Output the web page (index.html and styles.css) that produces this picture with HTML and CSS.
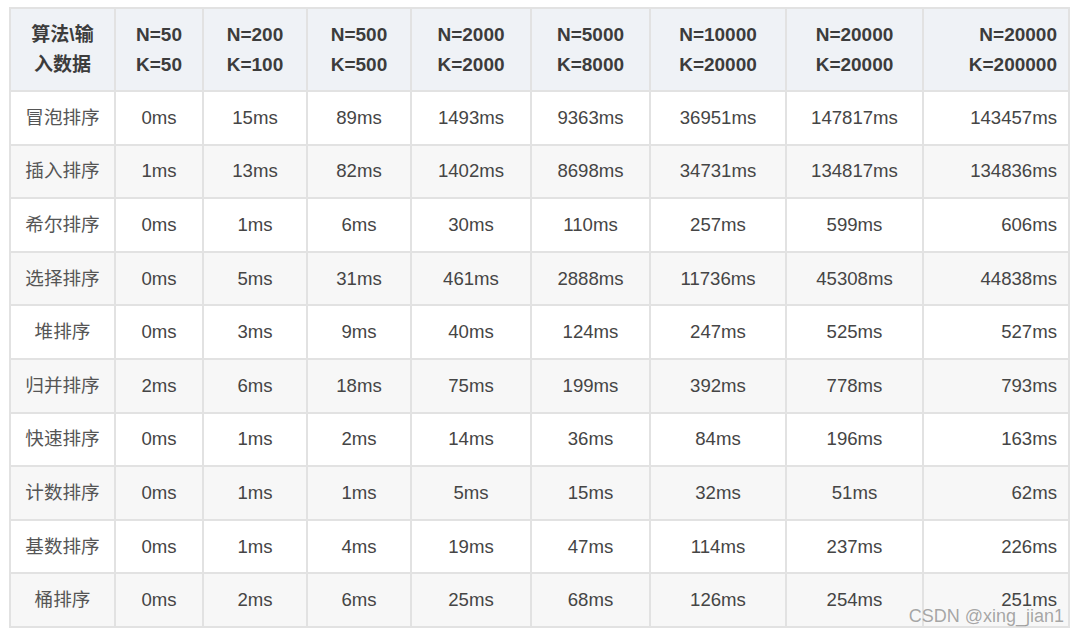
FILE: index.html
```html
<!DOCTYPE html>
<html lang="zh">
<head>
<meta charset="utf-8">
<title>排序算法耗时</title>
<link rel="stylesheet" href="styles.css">
</head>
<body>
<div class="wrap">
<table class="bench">
  <colgroup>
    <col class="c0"><col class="c1"><col class="c2"><col class="c3"><col class="c4"><col class="c5"><col class="c6"><col class="c7"><col class="c8">
  </colgroup>
  <thead>
    <tr>
      <th>算法\输<br>入数据</th>
      <th>N=50<br>K=50</th>
      <th>N=200<br>K=100</th>
      <th>N=500<br>K=500</th>
      <th>N=2000<br>K=2000</th>
      <th>N=5000<br>K=8000</th>
      <th>N=10000<br>K=20000</th>
      <th>N=20000<br>K=20000</th>
      <th>N=20000<br>K=200000</th>
    </tr>
  </thead>
  <tbody>
    <tr><td>冒泡排序</td><td>0ms</td><td>15ms</td><td>89ms</td><td>1493ms</td><td>9363ms</td><td>36951ms</td><td>147817ms</td><td>143457ms</td></tr>
    <tr><td>插入排序</td><td>1ms</td><td>13ms</td><td>82ms</td><td>1402ms</td><td>8698ms</td><td>34731ms</td><td>134817ms</td><td>134836ms</td></tr>
    <tr><td>希尔排序</td><td>0ms</td><td>1ms</td><td>6ms</td><td>30ms</td><td>110ms</td><td>257ms</td><td>599ms</td><td>606ms</td></tr>
    <tr><td>选择排序</td><td>0ms</td><td>5ms</td><td>31ms</td><td>461ms</td><td>2888ms</td><td>11736ms</td><td>45308ms</td><td>44838ms</td></tr>
    <tr><td>堆排序</td><td>0ms</td><td>3ms</td><td>9ms</td><td>40ms</td><td>124ms</td><td>247ms</td><td>525ms</td><td>527ms</td></tr>
    <tr><td>归并排序</td><td>2ms</td><td>6ms</td><td>18ms</td><td>75ms</td><td>199ms</td><td>392ms</td><td>778ms</td><td>793ms</td></tr>
    <tr><td>快速排序</td><td>0ms</td><td>1ms</td><td>2ms</td><td>14ms</td><td>36ms</td><td>84ms</td><td>196ms</td><td>163ms</td></tr>
    <tr><td>计数排序</td><td>0ms</td><td>1ms</td><td>1ms</td><td>5ms</td><td>15ms</td><td>32ms</td><td>51ms</td><td>62ms</td></tr>
    <tr><td>基数排序</td><td>0ms</td><td>1ms</td><td>4ms</td><td>19ms</td><td>47ms</td><td>114ms</td><td>237ms</td><td>226ms</td></tr>
    <tr><td>桶排序</td><td>0ms</td><td>2ms</td><td>6ms</td><td>25ms</td><td>68ms</td><td>126ms</td><td>254ms</td><td>251ms</td></tr>
  </tbody>
</table>
<div class="watermark">CSDN @xing_jian1</div>
</div>
</body>
</html>
```

FILE: styles.css
```css
html, body {
  margin: 0;
  padding: 0;
  background: #ffffff;
}

.wrap {
  position: relative;
  width: 1080px;
  height: 635px;
  padding: 7px 0 0 9px;
  box-sizing: border-box;
}

.bench {
  border-collapse: collapse;
  table-layout: fixed;
  width: 1059px;
  font-family: "Liberation Sans", Arial, "Noto Sans CJK SC", sans-serif;
  color: #444444;
}

.c0 { width: 105px; }
.c1 { width: 88px; }
.c2 { width: 104px; }
.c3 { width: 104px; }
.c4 { width: 120px; }
.c5 { width: 119px; }
.c6 { width: 136px; }
.c7 { width: 137px; }
.c8 { width: 146px; }

.bench th,
.bench td {
  border: 2px solid #e2e2e2;
  text-align: center;
  padding: 0 6px;
  line-height: 30px;
}

.bench th {
  background: #eff2f6;
  font-weight: bold;
  font-size: 19px;
  height: 81px;
  color: #3c3c3c;
}

.bench td {
  font-size: 18.6px;
  height: 51.6px;
  color: #454545;
}

.bench th:last-child,
.bench td:last-child {
  text-align: right;
  padding-right: 11px;
}

.bench tbody tr:nth-child(even) td {
  background: #f7f7f7;
}

.bench td:first-child {
  color: #555555;
}

.watermark {
  position: absolute;
  right: 16px;
  top: 605px;
  font-family: "Liberation Sans", Arial, sans-serif;
  font-size: 18px;
  line-height: 22px;
  color: rgba(130, 130, 130, 0.7);
  letter-spacing: 0;
}
```
